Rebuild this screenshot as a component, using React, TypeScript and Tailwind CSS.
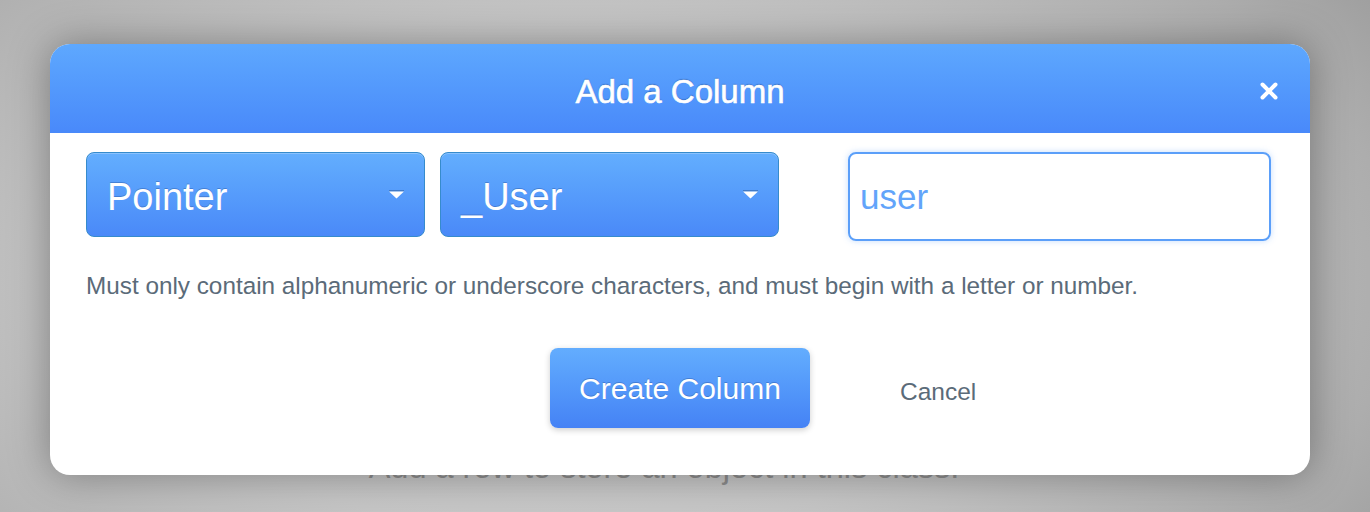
const font = { fontFamily: '"Liberation Sans", Arial, sans-serif' };

function Caret() {
  return (
    <svg width="15" height="9" viewBox="0 0 15 9" className="shrink-0">
      <rect x="0" y="0" width="15" height="1.5" fill="#2f5f9c" opacity="0.55" />
      <path d="M0 1.5 L15 1.5 L7.5 8.5 Z" fill="#ffffff" />
    </svg>
  );
}

function Dropdown({ label }: { label: string }) {
  return (
    <div className="flex h-[85px] w-[339px] items-center justify-between rounded-[8px] border border-[#368bcc] bg-gradient-to-b from-[#63aefe] to-[#4a89f8] pl-[20px] pr-[20px] shadow-[inset_0_1px_0_rgba(255,255,255,0.25)]">
      <span className="pt-[4px] text-[38px] leading-none text-white [text-shadow:0_-1px_0_rgba(30,70,140,0.35)]">{label}</span>
      <Caret />
    </div>
  );
}

export default function App() {
  return (
    <div
      style={font}
      className="relative h-[512px] w-[1370px] overflow-hidden bg-[radial-gradient(ellipse_75%_110%_at_42%_55%,#d2d2d2_0%,#c6c6c6_45%,#adadad_80%,#979797_100%)]"
    >
      <div className="flex justify-center pr-[42px] pt-[451px]">
        <p className="text-[32.5px] leading-none text-[#8e8e8e]">Add a row to store an object in this class.</p>
      </div>

      <div className="absolute left-[50px] top-[44px] flex h-[431px] w-[1260px] flex-col overflow-hidden rounded-[20px] bg-white shadow-[0_0_40px_rgba(0,0,0,0.35)]">
        <div className="relative flex h-[89px] items-center justify-center bg-gradient-to-b from-[#5ea8fe] to-[#4989fa]">
          <h2 className="pt-[5px] text-[33px] leading-none text-white [-webkit-text-stroke:0.6px_#ffffff] [text-shadow:0_-1px_1px_rgba(20,60,130,0.45)]">Add a Column</h2>
          <button className="absolute right-[32px] top-[38px] text-white">
            <svg width="18" height="18" viewBox="0 0 18 18">
              <path d="M2.5 2.5 L15.5 15.5 M15.5 2.5 L2.5 15.5" stroke="#ffffff" strokeWidth="4" strokeLinecap="round" />
            </svg>
          </button>
        </div>

        <div className="flex flex-col px-[36px] pt-[19px]">
          <div className="flex items-start">
            <Dropdown label="Pointer" />
            <div className="ml-[15px]">
              <Dropdown label="_User" />
            </div>
            <div className="ml-[69px] flex h-[89px] w-[423px] items-center rounded-[8px] border-2 border-[#5b9ff9] px-[10px] shadow-[0_0_6px_rgba(91,159,249,0.35)]">
              <span className="text-[35px] leading-none text-[#62a4fa]">user</span>
            </div>
          </div>

          <p className="mt-[33px] text-[24.3px] leading-none text-[#5b6b79]">
            Must only contain alphanumeric or underscore characters, and must begin with a letter or number.
          </p>

          <div className="mt-[50px] flex items-center pl-[464px]">
            <button className="flex h-[80px] w-[260px] items-center justify-center rounded-[8px] bg-gradient-to-b from-[#63adfe] to-[#4582f5] text-[30px] text-white shadow-[0_2px_6px_rgba(0,0,0,0.2)] [text-shadow:0_-1px_0_rgba(30,70,140,0.35)]">
              Create Column
            </button>
            <button className="ml-[90px] mt-[8px] text-[24.5px] text-[#5b6b79]">Cancel</button>
          </div>
        </div>
      </div>
    </div>
  );
}
